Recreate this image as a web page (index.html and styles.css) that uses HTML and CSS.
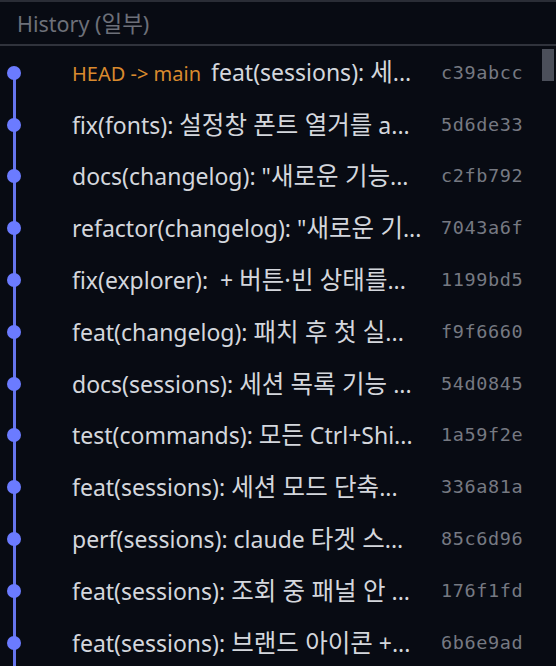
FILE: index.html
```html
<!DOCTYPE html>
<html lang="ko">
<head>
<meta charset="utf-8">
<link rel="stylesheet" href="styles.css">
</head>
<body>
<div class="panel">
  <div class="header">History (<span class="ko-h">일부</span>)</div>
  <div class="list">
    <div class="row first"><div class="graph"><span class="dot"></span></div><div class="msg"><span class="ref">HEAD -&gt; main</span>feat(sessions): <span class="ko">세</span>...</div><div class="hash">c39abcc</div></div>
    <div class="row"><div class="graph"><span class="dot"></span></div><div class="msg">fix(fonts): <span class="ko">설정창 폰트 열거를</span> a...</div><div class="hash">5d6de33</div></div>
    <div class="row"><div class="graph"><span class="dot"></span></div><div class="msg">docs(changelog): "<span class="ko">새로운 기능</span>...</div><div class="hash">c2fb792</div></div>
    <div class="row"><div class="graph"><span class="dot"></span></div><div class="msg">refactor(changelog): "<span class="ko">새로운 기</span>...</div><div class="hash">7043a6f</div></div>
    <div class="row"><div class="graph"><span class="dot"></span></div><div class="msg">fix(explorer): &nbsp;+ <span class="ko">버튼·빈 상태를</span>...</div><div class="hash">1199bd5</div></div>
    <div class="row"><div class="graph"><span class="dot"></span></div><div class="msg">feat(changelog): <span class="ko">패치 후 첫 실</span>...</div><div class="hash">f9f6660</div></div>
    <div class="row"><div class="graph"><span class="dot"></span></div><div class="msg">docs(sessions): <span class="ko">세션 목록 기능</span> ...</div><div class="hash">54d0845</div></div>
    <div class="row"><div class="graph"><span class="dot"></span></div><div class="msg">test(commands): <span class="ko">모든</span> Ctrl+Shi...</div><div class="hash">1a59f2e</div></div>
    <div class="row"><div class="graph"><span class="dot"></span></div><div class="msg">feat(sessions): <span class="ko">세션 모드 단축</span>...</div><div class="hash">336a81a</div></div>
    <div class="row"><div class="graph"><span class="dot"></span></div><div class="msg">perf(sessions): claude <span class="ko">타겟 스</span>...</div><div class="hash">85c6d96</div></div>
    <div class="row"><div class="graph"><span class="dot"></span></div><div class="msg">feat(sessions): <span class="ko">조회 중 패널 안</span> ...</div><div class="hash">176f1fd</div></div>
    <div class="row"><div class="graph"><span class="dot"></span></div><div class="msg">feat(sessions): <span class="ko">브랜드 아이콘</span> +...</div><div class="hash">6b6e9ad</div></div>
    <div class="scrollbar"></div>
  </div>
</div>
</body>
</html>
```

FILE: styles.css
```css
html, body {
  margin: 0;
  padding: 0;
  background: #080b13;
  height: 100%;
  overflow: hidden;
}

.panel {
  border-top: 2px solid #2a2d36;
  font-family: "Noto Sans", "Noto Sans CJK KR", sans-serif;
}

.header {
  height: 42px;
  line-height: 44px;
  padding-left: 17px;
  font-size: 21.5px;
  color: #6d7079;
  border-bottom: 2px solid #30333c;
}

.ko-h {
  font-size: 22.5px;
}

.list {
  position: relative;
  padding-top: 1px;
}

.row {
  display: grid;
  grid-template-columns: 28px minmax(0, 1fr) 115px;
  column-gap: 16px;
  height: 51.8px;
  align-items: center;
}

.graph {
  position: relative;
  height: 100%;
  display: flex;
  align-items: center;
  justify-content: center;
}

.graph::before {
  content: "";
  position: absolute;
  left: 12.5px;
  width: 3px;
  top: 0;
  bottom: 0;
  background: #6675ee;
}

.first .graph::before {
  top: 50%;
}

.dot {
  position: relative;
  width: 14px;
  height: 14px;
  border-radius: 50%;
  background: #6b7bff;
}

.msg {
  padding-left: 28px;
  font-size: 23px;
  line-height: 36px;
  color: #d4d7dd;
  white-space: nowrap;
}

.ko {
  font-size: 24.5px;
}

.ref {
  color: #d98a2e;
  font-size: 20px;
  margin-right: 10px;
}

.hash {
  font-family: "DejaVu Sans Mono", monospace;
  font-size: 18.5px;
  line-height: 30px;
  letter-spacing: 0.6px;
  color: #767982;
  white-space: nowrap;
}

.scrollbar {
  position: absolute;
  top: 3px;
  right: 2px;
  width: 12px;
  height: 32px;
  background: #4b4f5a;
}
```
